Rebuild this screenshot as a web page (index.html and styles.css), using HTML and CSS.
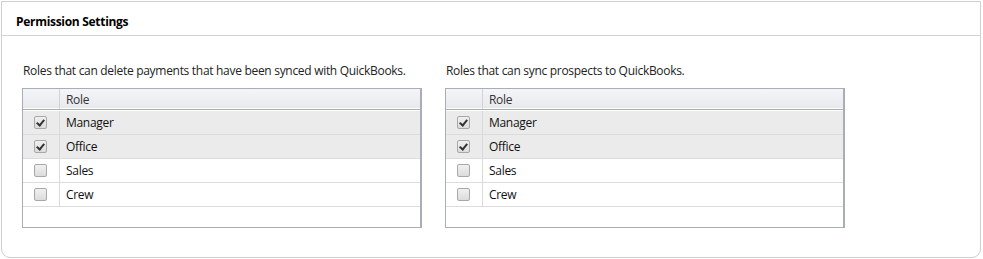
FILE: index.html
```html
<!DOCTYPE html>
<html>
<head>
<meta charset="utf-8">
<link rel="stylesheet" href="styles.css">
</head>
<body>
<div class="panel">
  <div class="panel-head">Permission Settings</div>
  <div class="panel-body">
    <div class="group">
      <p class="desc">Roles that can delete payments that have been synced with QuickBooks.</p>
      <div class="grid">
        <div class="row head"><div class="c1"></div><div class="c2">Role</div></div>
        <div class="row sel"><div class="c1"><span class="cb on"></span></div><div class="c2">Manager</div></div>
        <div class="row sel"><div class="c1"><span class="cb on"></span></div><div class="c2">Office</div></div>
        <div class="row"><div class="c1"><span class="cb"></span></div><div class="c2">Sales</div></div>
        <div class="row"><div class="c1"><span class="cb"></span></div><div class="c2">Crew</div></div>
        <div class="filler"></div>
      </div>
    </div>
    <div class="group">
      <p class="desc">Roles that can sync prospects to QuickBooks.</p>
      <div class="grid">
        <div class="row head"><div class="c1"></div><div class="c2">Role</div></div>
        <div class="row sel"><div class="c1"><span class="cb on"></span></div><div class="c2">Manager</div></div>
        <div class="row sel"><div class="c1"><span class="cb on"></span></div><div class="c2">Office</div></div>
        <div class="row"><div class="c1"><span class="cb"></span></div><div class="c2">Sales</div></div>
        <div class="row"><div class="c1"><span class="cb"></span></div><div class="c2">Crew</div></div>
        <div class="filler"></div>
      </div>
    </div>
  </div>
</div>
</body>
</html>
```
FILE: styles.css
```css
html, body { margin: 0; padding: 0; background: #fff; }
body { font-family: "Open Sans", "DejaVu Sans", sans-serif; font-size: 12px; letter-spacing: -0.3px; color: #111; }
.panel {
  margin: 1px 2px 1px 1px;
  width: 980px;
  height: 257px;
  box-sizing: border-box;
  border: 1px solid #cfcfcf;
  border-radius: 0 0 9px 9px;
}
.panel-head {
  height: 34px;
  box-sizing: border-box;
  border-bottom: 1px solid #d3d3d3;
  padding: 11px 0 0 14px;
  font-weight: bold;
  font-size: 12px;
  color: #000;
}
.panel-body {
  display: flex;
  gap: 23px;
  padding: 27px 0 0 20px;
}
.group { width: 400px; }
.desc { margin: 0 0 9px 1px; line-height: 16px; color: #222; white-space: nowrap; }
.grid {
  border: 1px solid #a9adb5;
  border-right-width: 2px;
  height: 140px;
  box-sizing: border-box;
  display: flex;
  flex-direction: column;
}
.row { display: flex; height: 24px; border-bottom: 1px solid #dcdcdc; box-sizing: border-box; }
.row.head {
  height: 21px;
  background: linear-gradient(#f4f5f8, #e7e9ed);
  border-bottom: 1px solid #a9adb5;
  box-shadow: inset 0 -1px 0 #fff;
  color: #333;
}
.row.head + .row { margin-top: 1px; }
.row.sel { background: #ebebeb; }
.c1 {
  width: 37px;
  box-sizing: border-box;
  padding-left: 11px;
  border-right: 1px solid #d9d9d9;
  display: flex;
  align-items: center;
}
.row.head .c1 { border-right-color: #d0d3d9; }
.c2 { padding-left: 6px; display: flex; align-items: center; }
.filler { flex: 1; }
.cb {
  display: block;
  width: 11px;
  height: 11px;
  border: 1px solid #a8a8a8;
  border-radius: 2px;
  background: linear-gradient(#f0f0f0, #dcdcdc);
  position: relative;
}
.cb.on::after {
  content: "";
  position: absolute;
  left: 3px;
  top: 1px;
  width: 3px;
  height: 6px;
  border: solid #333;
  border-width: 0 2px 2px 0;
  transform: rotate(40deg);
}
```
